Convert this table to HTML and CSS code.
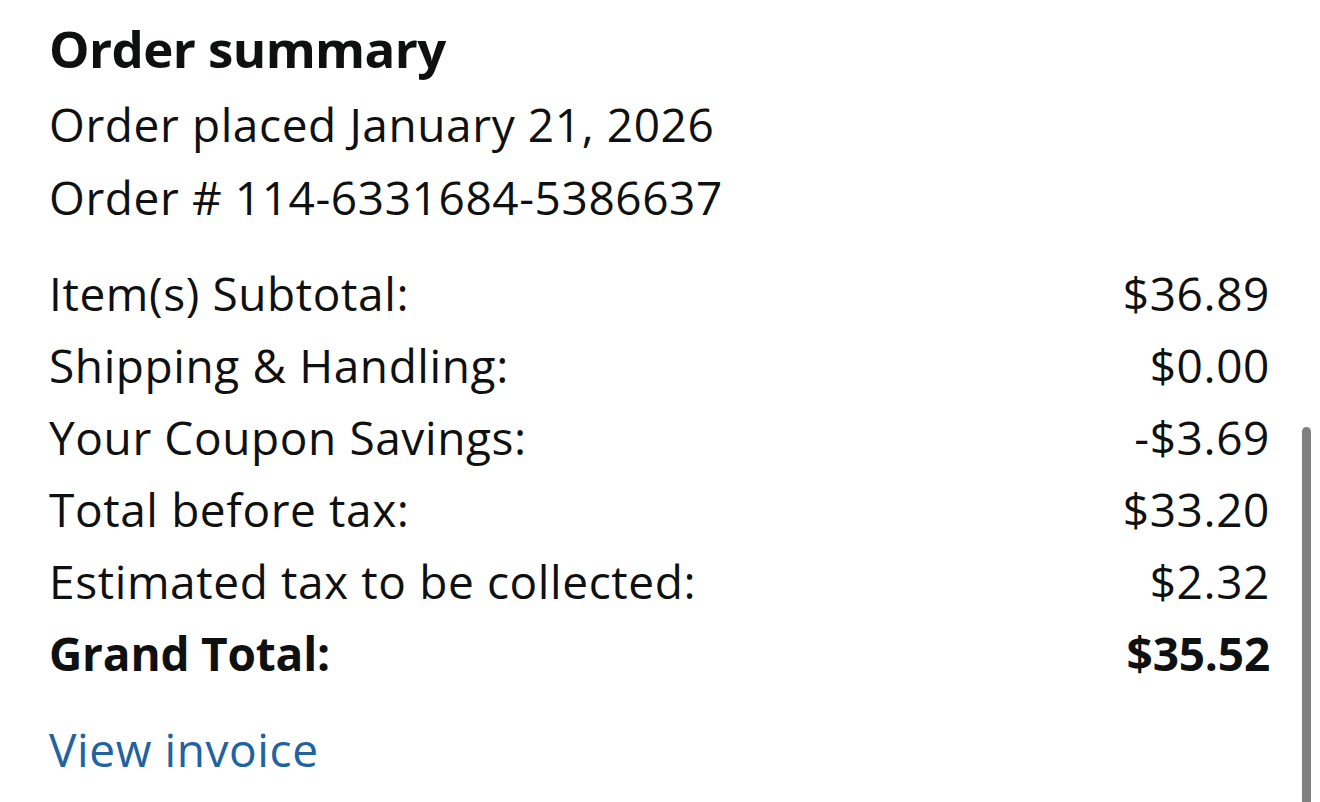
FILE: index.html
```html
<!DOCTYPE html>
<html lang="en">
<head>
<meta charset="utf-8">
<title>Order summary</title>
<link rel="stylesheet" href="styles.css">
</head>
<body>
<main class="summary">
  <h1 class="summary-title">Order summary</h1>
  <div class="order-meta">
    <p class="meta-line">Order placed January 21, 2026</p>
    <p class="meta-line">Order # 114-6331684-5386637</p>
  </div>
  <div class="totals">
    <div class="total-row"><span>Item(s) Subtotal:</span><span>$36.89</span></div>
    <div class="total-row"><span>Shipping &amp; Handling:</span><span>$0.00</span></div>
    <div class="total-row"><span>Your Coupon Savings:</span><span>-$3.69</span></div>
    <div class="total-row"><span>Total before tax:</span><span>$33.20</span></div>
    <div class="total-row"><span>Estimated tax to be collected:</span><span>$2.32</span></div>
    <div class="total-row grand"><span>Grand Total:</span><span>$35.52</span></div>
  </div>
  <a class="invoice-link" href="#">View invoice</a>
</main>
<div class="scroll-indicator"></div>
</body>
</html>
```
FILE: styles.css
```css
html, body {
  margin: 0;
  padding: 0;
  background: #ffffff;
}
body {
  font-family: "Open Sans", "Noto Sans", sans-serif;
  color: #0f1111;
  font-size: 46px;
  line-height: 72px;
  letter-spacing: 0.6px;
  overflow: hidden;
  height: 802px;
}
.summary {
  padding: 12px 50px 0 49px;
  display: flex;
  flex-direction: column;
}
.summary-title {
  margin: 0 0 4px 0;
  font-size: 51px;
  line-height: 72px;
  font-weight: 700;
  letter-spacing: -0.6px;
}
.order-meta {
  display: flex;
  flex-direction: column;
}
.meta-line {
  margin: 0;
}
.meta-line + .meta-line {
  margin-top: 1px;
}
.totals {
  margin-top: 24px;
  display: flex;
  flex-direction: column;
}
.total-row {
  display: flex;
  justify-content: space-between;
  height: 72px;
}
.total-row.grand {
  font-weight: 700;
  letter-spacing: -0.2px;
}
.invoice-link {
  margin-top: 24px;
  color: #2162a1;
  text-decoration: none;
  align-self: flex-start;
}
.scroll-indicator {
  position: absolute;
  left: 1302px;
  top: 427px;
  width: 9px;
  height: 380px;
  background: #808080;
  border-radius: 4.5px;
}
```
